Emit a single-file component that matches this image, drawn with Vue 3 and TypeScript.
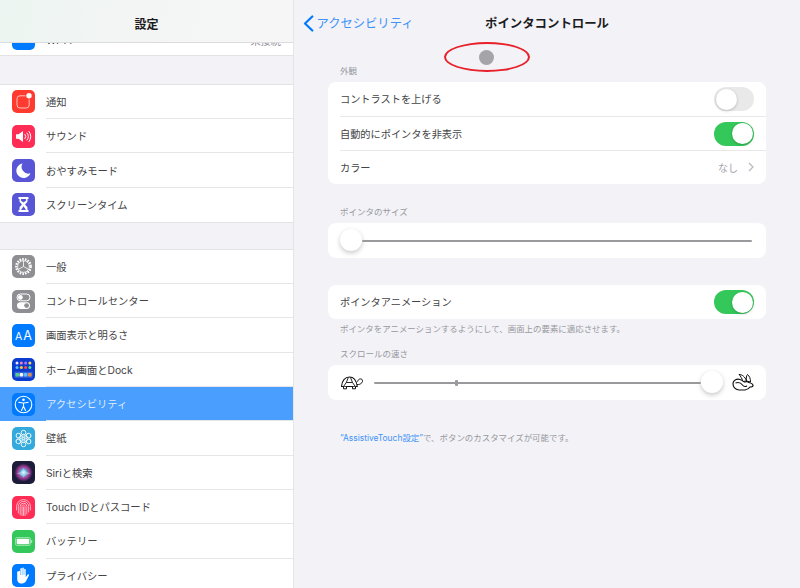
<script setup lang="ts">
interface SettingRow {
  label: string;
  icon: string;
  color: string;
  active?: boolean;
}

const groups: SettingRow[][] = [
  [
    { label: "通知", icon: "notify", color: "#ff3b30" },
    { label: "サウンド", icon: "sound", color: "#ff2d55" },
    { label: "おやすみモード", icon: "moon", color: "#5856d6" },
    { label: "スクリーンタイム", icon: "hourglass", color: "#5856d6" },
  ],
  [
    { label: "一般", icon: "gear", color: "#8e8e93" },
    { label: "コントロールセンター", icon: "control", color: "#8e8e93" },
    { label: "画面表示と明るさ", icon: "display", color: "#007aff" },
    { label: "ホーム画面とDock", icon: "home", color: "#0b3ccf" },
    { label: "アクセシビリティ", icon: "access", color: "#007aff", active: true },
    { label: "壁紙", icon: "wallpaper", color: "#34aadc" },
    { label: "Siriと検索", icon: "siri", color: "#1c1c3a" },
    { label: "Touch IDとパスコード", icon: "touch", color: "#ff2d55" },
    { label: "バッテリー", icon: "battery", color: "#34c759" },
    { label: "プライバシー", icon: "hand", color: "#007aff" },
  ],
];

const dockDots = [
  ["#e8e8f5", "#ff7fb0", "#b070ff", "#ffd84a"],
  ["#50c8ff", "#ffc830", "#ff4a4a", "#50e090"],
];
const dockBottom = ["#50d080", "#f4f4f4", "#60c0ff", "#e09050"];
const petals = [0, 60, 120, 180, 240, 300];
</script>

<template>
  <div class="screen">
    <aside class="sidebar">
      <header class="sidebar-head">設定</header>

      <div class="settings-list">
        <div class="setting-row setting-row--peek">
          <span class="app-icon" style="background: #007aff"></span>
          <span class="setting-label">Wi-Fi</span>
          <span class="setting-value">未接続</span>
        </div>

        <div v-for="(group, g) in groups" :key="g" class="settings-group">
          <div
            v-for="row in group"
            :key="row.label"
            class="setting-row"
            :class="{ 'setting-row--active': row.active }"
          >
            <span class="app-icon" :style="{ background: row.color }">
              <span v-if="row.icon === 'display'" class="aa-glyph"><small>A</small>A</span>
              <svg v-else viewBox="0 0 23 23" width="23" height="23">
                <template v-if="row.icon === 'notify'">
                  <rect x="5" y="5.8" width="12.2" height="12.2" rx="3" fill="none" stroke="#ffc4bf" stroke-width="1" />
                  <circle cx="17" cy="5.8" r="3.6" fill="#ff3b30" />
                  <circle cx="17" cy="5.8" r="2.7" fill="#fff" />
                </template>
                <template v-else-if="row.icon === 'sound'">
                  <path d="M4 9.2h2.6L11 6v11l-4.4-3.2H4z" fill="#fff" />
                  <path d="M13 9.5a3 3 0 0 1 0 4M15 8a5.4 5.4 0 0 1 0 7M17 6.5a7.6 7.6 0 0 1 0 10" fill="none" stroke="#fff" stroke-width="1" stroke-linecap="round" />
                </template>
                <path
                  v-else-if="row.icon === 'moon'"
                  d="M10.500 4.500a7.300 7.300 0 1 0 8 9.800 6.800 6.800 0 0 1-8-9.800z"
                  fill="#fff"
                />
                <template v-else-if="row.icon === 'hourglass'">
                  <path d="M6.500 4h10v2h-1v2.200c0 1.600-2.300 2.300-2.300 3.300s2.300 1.700 2.300 3.300V17h1v2h-10v-2h1v-2.200c0-1.600 2.300-2.300 2.300-3.300S7.500 9.800 7.500 8.200V6h-1z" fill="#fff" />
                  <path d="M9 6h5v1.800l-2.500 1.800L9 7.800zM11.500 13.200l2.500 3.800H9z" fill="#5856d6" />
                </template>
                <template v-else-if="row.icon === 'gear'">
                  <circle cx="11.500" cy="11.500" r="7.200" fill="none" stroke="#fff" stroke-width="2.400" stroke-dasharray="1.600 1.100" />
                  <circle cx="11.500" cy="11.500" r="5.800" fill="none" stroke="#fff" stroke-width="0.800" />
                  <path d="M11.500 11.500V6M11.500 11.500l4.800 2.700M11.500 11.500l-4.800 2.700" stroke="#fff" stroke-width="0.800" />
                </template>
                <template v-else-if="row.icon === 'control'">
                  <rect x="5" y="4" width="13" height="6.800" rx="3.400" fill="none" stroke="#fff" stroke-width="1" />
                  <circle cx="8.400" cy="7.400" r="2.400" fill="#fff" />
                  <rect x="5" y="12.200" width="13" height="6.800" rx="3.400" fill="#fff" />
                  <circle cx="14.600" cy="15.600" r="2.400" fill="#8e8e93" />
                </template>
                <template v-else-if="row.icon === 'home'">
                  <g v-for="(line, y) in dockDots" :key="y">
                    <circle v-for="(fill, x) in line" :key="x" :cx="5 + x * 4.300" :cy="5 + y * 4.600" r="1.500" :fill="fill" />
                  </g>
                  <rect x="2.500" y="13.800" width="18" height="6" rx="1" fill="#3a62d8" />
                  <rect v-for="(fill, x) in dockBottom" :key="x" :x="3.400 + x * 4.200" y="15" width="3.600" height="3.600" rx="0.800" :fill="fill" />
                </template>
                <template v-else-if="row.icon === 'access'">
                  <circle cx="11.500" cy="11.500" r="8.300" fill="none" stroke="#fff" stroke-width="1.100" />
                  <circle cx="11.500" cy="6.800" r="1.300" fill="#fff" />
                  <path d="M6.800 9.300c1.600.5 3 .7 4.700.7s3.100-.2 4.700-.7M11.500 10v3.200M11.500 13.200L9.500 17.500M11.500 13.200l2 4.300" fill="none" stroke="#fff" stroke-width="1.100" stroke-linecap="round" />
                </template>
                <template v-else-if="row.icon === 'wallpaper'">
                  <g v-for="a in petals" :key="a" :transform="`rotate(${a} 11.500 11.500)`">
                    <circle cx="11.500" cy="5.600" r="2.300" fill="none" stroke="#fff" stroke-width="0.900" />
                    <circle cx="11.500" cy="8.900" r="1.700" fill="none" stroke="#e5f5fc" stroke-width="0.800" />
                  </g>
                </template>
                <template v-else-if="row.icon === 'siri'">
                  <defs>
                    <radialGradient id="siri-orb">
                      <stop offset="0" stop-color="#e8fbff" />
                      <stop offset="0.3" stop-color="#45b8d8" />
                      <stop offset="0.65" stop-color="#a83c98" />
                      <stop offset="1" stop-color="#2a2048" />
                    </radialGradient>
                  </defs>
                  <circle cx="11.500" cy="11.500" r="8.800" fill="url(#siri-orb)" />
                  <path d="M4 12.500c3-.2 5-1.500 7.500-5.500 1.500 3 4 5 7.500 5.500-3 .2-5.500 1-7.500 4-2-3-4.500-3.800-7.500-4z" fill="#e8f0ff" fill-opacity="0.45" />
                </template>
                <g v-else-if="row.icon === 'touch'" fill="none" stroke="#ffd5df" stroke-width="0.800" stroke-linecap="round">
                  <path d="M4.600 14V10.500a6.900 6.900 0 0 1 13.800 0V14" />
                  <path d="M6.400 17V10.500a5.100 5.100 0 0 1 10.200 0V16" />
                  <path d="M8.200 18.800V10.500a3.300 3.300 0 0 1 6.600 0V18" />
                  <path d="M10 19.500V10.500a1.500 1.500 0 0 1 3 0V19.500" />
                  <path d="M11.500 11v8.500" />
                </g>
                <template v-else-if="row.icon === 'battery'">
                  <rect x="3.500" y="7.500" width="15" height="8" rx="1.600" fill="none" stroke="#a8e8b8" stroke-width="0.800" />
                  <rect x="4.700" y="8.700" width="12.600" height="5.600" rx="0.800" fill="#fff" />
                  <rect x="19" y="10" width="1.200" height="3" rx="0.500" fill="#a8e8b8" />
                </template>
                <path
                  v-else-if="row.icon === 'hand'"
                  d="M6.500 7.500c0-1 1.500-1 1.500 0V11h.4V4.800c0-1 1.500-1 1.500 0V11h.4V4.200c0-1 1.500-1 1.500 0V11h.4V5.500c0-1 1.500-1 1.500 0v7.700l1.800-2.500c.7-.9 2-.2 1.400.8l-2.800 5.500c-.9 1.600-2.300 2.500-4 2.500h-1c-2.200 0-3.900-1.700-3.900-4V7.500z"
                  fill="#fff"
                />
              </svg>
            </span>
            <span class="setting-label">{{ row.label }}</span>
          </div>
        </div>
      </div>
    </aside>

    <main class="detail">
      <nav class="detail-nav">
        <span class="back-link">
          <svg viewBox="0 0 11 17" width="11" height="17">
            <path d="M9.300 1.500L2 8.500l7.300 7" fill="none" stroke="#007aff" stroke-width="2.200" stroke-linecap="round" stroke-linejoin="round" />
          </svg>
          アクセシビリティ
        </span>
        <h1 class="detail-title">ポインタコントロール</h1>
      </nav>

      <!-- annotation drawn over the page, with the pointer itself -->
      <div class="pointer-dot"></div>
      <div class="pointer-ring"></div>

      <div class="detail-body">
        <p class="group-label group-label--first">外観</p>
        <section class="card">
          <div class="card-row">
            <span class="card-text">コントラストを上げる</span>
            <span class="toggle"><i class="toggle-knob"></i></span>
          </div>
          <div class="card-row">
            <span class="card-text">自動的にポインタを非表示</span>
            <span class="toggle toggle--on"><i class="toggle-knob"></i></span>
          </div>
          <div class="card-row">
            <span class="card-text">カラー</span>
            <span class="color-value">
              なし
              <svg viewBox="0 0 6 10" width="6" height="10">
                <path d="M1 1l4 4-4 4" fill="none" stroke="#b8b8bd" stroke-width="1.200" />
              </svg>
            </span>
          </div>
        </section>

        <p class="group-label">ポインタのサイズ</p>
        <section class="card">
          <div class="slider-row">
            <span class="thumb"></span>
            <span class="track"></span>
          </div>
        </section>

        <section class="card card--animation">
          <div class="card-row">
            <span class="card-text">ポインタアニメーション</span>
            <span class="toggle toggle--on"><i class="toggle-knob"></i></span>
          </div>
        </section>
        <p class="note">ポインタをアニメーションするようにして、画面上の要素に適応させます。</p>

        <p class="group-label group-label--scroll">スクロールの速さ</p>
        <section class="card">
          <div class="slider-row slider-row--speed">
            <svg class="speed-icon" viewBox="0 0 24 16" width="24" height="16">
              <path d="M1.500 12.500c.3-5.500 3.500-9.500 8-9.500s7 4 7.800 9.500z" fill="#fff" stroke="#111" stroke-width="1.100" stroke-linejoin="round" />
              <path d="M3.500 12.500l2.800-4h6.200l2.800 4M6.300 8.500l2-5M12.500 8.500l-2-5" fill="none" stroke="#111" stroke-width="0.900" />
              <path d="M3.500 12.800v2h3v-2M12.500 12.800v2h3v-2" fill="#fff" stroke="#111" stroke-width="1" />
              <path d="M17 10.500c2 .3 3.600-.4 4.800-1.700 1.400-1.500.8-3.900-1.200-3.900-1.700 0-2.900 1.300-3 2.800" fill="#fff" stroke="#111" stroke-width="1" />
            </svg>
            <span class="track track--speed"><i class="track-tick"></i></span>
            <span class="thumb"></span>
            <svg class="speed-icon speed-icon--rabbit" viewBox="0 0 22 18" width="22" height="18">
              <path d="M1 10.500C1 7.500 4.500 5.500 8 6.500c2 .5 3.500 1.500 4.500 2.500 1.500-.5 3.500-.5 4.500.5 2 .5 4 1.500 4 3 0 1-1.500 1.500-3 1.500-1 1.500-2.500 2.500-5 3H7C3.500 16.500 1 14 1 10.500z" fill="#fff" stroke="#111" stroke-width="1.200" stroke-linejoin="round" />
              <path d="M3.500 10c2.500-1 5.500 0 7 2 1 1.500 3 1.700 4.500 1" fill="none" stroke="#111" stroke-width="1.100" />
              <path d="M11 8.500C10 5.500 8.500 3 7 1.500c3 0 6 2 7.500 6.500zM14.500 8c-.5-3 0-5.500 1-6.500 2 1.500 3 4 3 7.500z" fill="#fff" stroke="#111" stroke-width="1" stroke-linejoin="round" />
            </svg>
          </div>
        </section>

        <p class="note note--footer"><span class="note-link">“AssistiveTouch設定”</span>で、ボタンのカスタマイズが可能です。</p>
      </div>
    </main>
  </div>
</template>

<style>
html,
body {
  margin: 0;
  background: #f2f2f7;
}
</style>

<style scoped>
.screen {
  display: flex;
  position: relative;
  width: 800px;
  height: 588px;
  overflow: hidden;
  background: #f2f2f7;
  color: #444446;
  font-family: Inter, "Noto Sans CJK JP", sans-serif;
}

/* Sidebar */
.sidebar {
  position: relative;
  flex: 0 0 293px;
  height: 588px;
  overflow: hidden;
  border-right: 1px solid #e4e4e9;
}

.sidebar-head {
  position: absolute;
  top: 0;
  left: 0;
  right: 0;
  z-index: 1;
  height: 43px;
  padding-top: 4px;
  box-sizing: border-box;
  display: flex;
  align-items: center;
  justify-content: center;
  border-bottom: 1px solid #dcdcde;
  background: linear-gradient(100deg, #ecf5f1 0%, #f3f5f4 45%, #f6f6f6 100%);
  color: #1c1c1e;
  font-size: 12px;
  font-weight: 700;
}

.settings-list {
  padding-top: 22px;
}

.settings-group {
  margin-top: 27.500px;
  border-top: 1px solid #e3e3e6;
  border-bottom: 1px solid #e3e3e6;
  background: #fff;
}

.settings-group + .settings-group {
  margin-top: 25.500px;
}

.setting-row {
  display: flex;
  align-items: center;
  height: 34.330px;
  padding: 0 12px;
  box-sizing: border-box;
  background: #fff;
  font-size: 10.300px;
}

.setting-row--peek {
  border-bottom: 1px solid #e3e3e6;
}

.setting-row--peek .setting-label,
.setting-row--peek .setting-value {
  position: relative;
  top: 2px;
}

.setting-label {
  position: relative;
  flex: 1;
  align-self: stretch;
  display: flex;
  align-items: center;
  margin-left: 11px;
  margin-right: -12px;
  padding-bottom: 1px;
  box-sizing: border-box;
}

.settings-group .setting-row:not(:last-child) .setting-label::after {
  content: "";
  position: absolute;
  left: 0;
  right: 0;
  bottom: 0;
  height: 1px;
  background: #e6e6e9;
}

.setting-row--active {
  background: #4a9efd;
  color: rgba(255, 255, 255, 0.82);
}

.setting-value {
  color: #8e8e93;
  font-size: 10.200px;
  margin-left: -12px;
}

.app-icon {
  flex: 0 0 23px;
  width: 23px;
  height: 23px;
  display: flex;
  align-items: center;
  justify-content: center;
  border-radius: 5px;
  overflow: hidden;
}

.aa-glyph {
  color: #fff;
  font-size: 12.500px;
  font-weight: 400;
}

.aa-glyph small {
  font-size: 10.500px;
  margin-right: 1px;
}

/* Detail pane */
.detail {
  flex: 1;
  min-width: 0;
}

.detail-nav {
  position: relative;
  height: 46px;
  display: flex;
  align-items: center;
  justify-content: center;
}

.back-link {
  position: absolute;
  left: 9px;
  top: 15px;
  display: flex;
  align-items: center;
  gap: 2.500px;
  color: #3f93f7;
  font-size: 12.300px;
  line-height: 17px;
}

.detail-title {
  margin: 0;
  color: #1c1c1e;
  font-size: 12.400px;
  font-weight: 700;
}

.pointer-dot {
  position: absolute;
  left: 478.500px;
  top: 49.500px;
  width: 15px;
  height: 15px;
  border-radius: 50%;
  background: #a5a4a9;
}

.pointer-ring {
  position: absolute;
  left: 444px;
  top: 42px;
  width: 86px;
  height: 30px;
  box-sizing: border-box;
  border: 2px solid #e8202a;
  border-radius: 50%;
}

.detail-body {
  padding: 0 34px;
}

.group-label {
  height: 12px;
  margin: 22px 0 5px;
  padding-left: 12px;
  color: #98989d;
  font-size: 8.500px;
  line-height: 13px;
}

.group-label--first {
  margin-top: 19px;
}

.group-label--scroll {
  margin-top: 13px;
}

.card {
  border-radius: 8px;
  background: #fff;
}

.card--animation {
  margin-top: 27.500px;
}

.card-row {
  position: relative;
  display: flex;
  align-items: center;
  justify-content: space-between;
  height: 34px;
  margin-left: 12px;
  padding-right: 12px;
  box-sizing: border-box;
  font-size: 10.200px;
}

.card-row + .card-row {
  border-top: 1px solid #e8e8ea;
}

.card-text {
  padding-bottom: 1px;
}

.color-value {
  display: flex;
  align-items: center;
  gap: 10px;
  padding-bottom: 1px;
  color: #a2a2a7;
  font-size: 10px;
}

.toggle {
  display: block;
  position: relative;
  width: 40px;
  height: 24px;
  border-radius: 12px;
  background: #e9e9ea;
}

.toggle--on {
  background: #34c759;
}

.toggle-knob {
  position: absolute;
  top: 1.500px;
  left: 1.500px;
  width: 21px;
  height: 21px;
  border-radius: 50%;
  background: #fff;
  box-shadow: 0 1px 3px rgba(0, 0, 0, 0.22);
}

.toggle--on .toggle-knob {
  left: 17.500px;
}

.slider-row {
  display: flex;
  align-items: center;
  height: 34.500px;
  padding: 0 14px 0 12px;
}

.slider-row--speed {
  padding: 0 12px;
}

.thumb {
  flex: 0 0 22px;
  height: 22px;
  border-radius: 50%;
  background: #fff;
  box-shadow: 0 2px 5px rgba(0, 0, 0, 0.22);
}

.track {
  position: relative;
  flex: 1;
  height: 2px;
  margin-top: 1px;
  border-radius: 1px;
  background: #9a9a9c;
}

.track--speed {
  margin-left: 10px;
}

.track-tick {
  position: absolute;
  left: 81px;
  top: -2px;
  width: 2.500px;
  height: 6px;
  border-radius: 1px;
  background: #9a9a9c;
}

.speed-icon {
  flex: none;
}

.speed-icon--rabbit {
  margin-left: 9px;
}

.note {
  margin: 4px 0 0;
  height: 12px;
  padding-left: 12px;
  color: #98989d;
  font-size: 8.450px;
  line-height: 13px;
}

.note--footer {
  margin-top: 32.500px;
}

.note-link {
  color: #3f93f7;
}
</style>
